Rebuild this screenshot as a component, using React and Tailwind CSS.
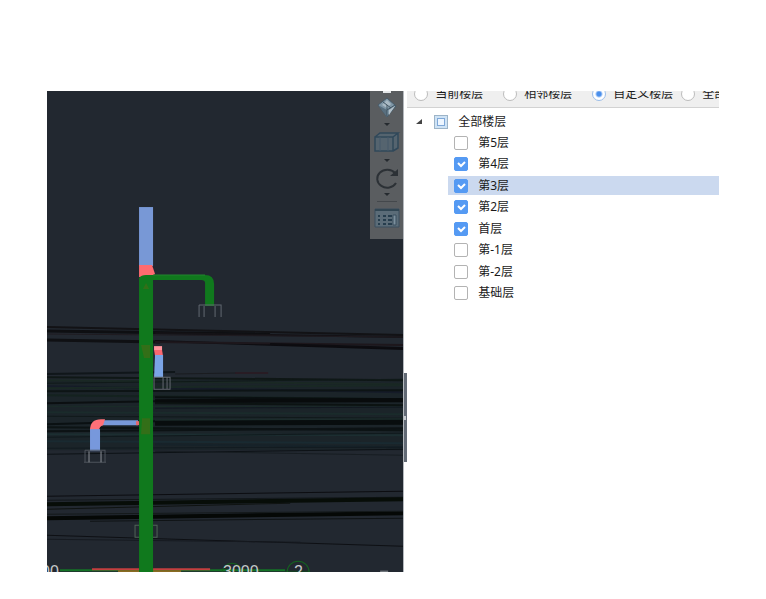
import { useState } from "react";

const BASE = [
  // x1, y1, x2, y2, colour, width
  [47, 327, 403, 335, "#121215", 2],
  [47, 331, 270, 334, "#0e0f12", 3],
  [155, 333, 403, 337, "#141216", 2],
  [47, 334, 403, 337, "#1f1b20", 1],
  [47, 340, 160, 342, "#0f1013", 3],
  [155, 341, 403, 349, "#0c0c10", 2],
  [155, 342, 403, 345, "#1d171c", 2],
  [270, 344, 403, 348, "#0d0c10", 2],
  [47, 374, 175, 372, "#10161a", 2],
  [175, 374, 235, 373, "#1a1c20", 1],
  [235, 373, 268, 373, "#2e1018", 1],
  [47, 377, 403, 380, "#0f1716", 2],
  [47, 380, 403, 384, "#1a2824", 2],
  [47, 383, 403, 379, "#101a19", 1],
  [47, 386, 403, 392, "#151b28", 2],
  [47, 388, 403, 385, "#192824", 2],
  [47, 391, 403, 390, "#0d1415", 2],
  [47, 395, 403, 399, "#14221f", 2],
  [155, 397, 403, 399, "#0a1011", 2],
  [47, 403, 155, 401, "#0b0f11", 2],
  [155, 401, 403, 400, "#080b0c", 4],
  [155, 403, 403, 405, "#0c1312", 2],
  [47, 406, 403, 407, "#1a2c28", 1],
  [155, 408, 403, 407, "#121821", 1],
  [47, 412, 403, 414, "#1a2b2b", 2],
  [47, 416, 403, 418, "#10191a", 1],
  [155, 420, 403, 419, "#1b2b2a", 2],
  [47, 424, 155, 421, "#0a1012", 2],
  [155, 423, 403, 422, "#080d0e", 5],
  [47, 427, 403, 430, "#0c1314", 2],
  [47, 431, 403, 428, "#0c1214", 2],
  [47, 434, 403, 435, "#1c2e31", 2],
  [47, 437, 403, 433, "#101a1d", 1],
  [47, 441, 403, 443, "#192a31", 2],
  [155, 444, 403, 447, "#162229", 2],
  [47, 448, 403, 447, "#121b20", 1],
  [47, 454, 403, 449, "#0d1216", 1],
  [155, 451, 403, 455, "#171d22", 1],
  [47, 496, 403, 491, "#0c0d11", 1],
  [47, 500, 403, 497, "#12171a", 1],
  [47, 504, 403, 499, "#070d08", 4],
  [47, 509, 290, 503, "#0f1311", 1],
  [47, 518, 403, 513, "#050806", 4],
  [47, 514, 403, 511, "#14191a", 1],
  [90, 521, 403, 518, "#0f1315", 1],
  [47, 535, 403, 546, "#0e1014", 1],
  [47, 539, 300, 542, "#161a20", 1],
];

function Model() {
  return (
    <svg
      className="block h-full w-full"
      viewBox="47 91 356 481"
      preserveAspectRatio="xMinYMin slice"
      role="img"
      aria-label="三维管道模型"
    >
      <rect x="47" y="91" width="356" height="481" fill="#222830" />
      <rect x="47" y="380" width="356" height="70" fill="#1b2429" />
      {BASE.map(([x1, y1, x2, y2, c, w], i) => (
        <line key={i} x1={x1} y1={y1} x2={x2} y2={y2} stroke={c} strokeWidth={w} />
      ))}

      <path d="M60 570H285" stroke="#147326" strokeWidth="2" />
      <path d="M285 571H310" stroke="#14471f" />
      <path d="M92 569H139M153 569H210" stroke="#c43f3f" strokeWidth="2" />
      <path d="M118 571h21M153 571h28" stroke="#8a6a22" strokeWidth="2" />

      <rect x="139" y="207" width="14" height="59" fill="#7898d6" />
      <path d="M139 265h13l3 9-4 3h-12z" fill="#ff6b70" />
      <path
        d="M139 278q2-3 7-3h59q9 0 9 9v22h-9v-23q0-3-4-3h-48v292h-14z"
        fill="#10791d"
      />
      <path d="M153 275h52" stroke="#23852e" />
      <path d="M143 289l3-6 3 6zM141 345h9v13h-6zM142 418h8v16h-9z" fill="#4b6916" opacity="0.6" />
      <path d="M199 305h22v12M199 305v12M204 306v11M215 306v11" fill="none" stroke="#616871" />

      <path d="M154 346h8v4h-8z" fill="#ff969d" />
      <path d="M154 350h8l1 6h-8z" fill="#fa6870" />
      <path d="M155 355h8v22h-9z" fill="#7ba4e5" />
      <path d="M154 377h16v12h-16zM163 377v12M167 377v12" fill="none" stroke="#63676e" />

      <path d="M100 420h38v5h-38z" fill="#7899d9" />
      <path d="M136 421h3v4h-3z" fill="#e2686f" />
      <path d="M90 430q0-11 11-11h4l-2 6q-4 1-4 6z" fill="#ff7078" />
      <rect x="90" y="429" width="10" height="22" fill="#7798dc" />
      <path d="M85 450h20v12M85 450v12M84 462h22" fill="none" stroke="#4d535b" />
      <path d="M89 451v11M101 451v11" stroke="#8c9096" />
      <path d="M139 525h-4v12h4M153 525h4v12h-4" fill="none" stroke="#4f6457" />

      <circle cx="232" cy="573" r="10" fill="none" stroke="#14641f" />
      <circle cx="298" cy="572" r="11" fill="none" stroke="#14641f" />
      <g fill="#c5c9ca" fontFamily="'Liberation Sans', Arial, sans-serif" fontSize="16">
        <text x="223" y="577">3000</text>
        <text x="294" y="577">2</text>
        <text x="41" y="577">00</text>
      </g>
      <path d="M380 571h8" stroke="#92979c" />
    </svg>
  );
}

function Caret() {
  return (
    <svg className="h-1 w-2" viewBox="0 0 8 4" aria-hidden="true">
      <path d="M1 0h6L4 3z" fill="#252a2f" />
    </svg>
  );
}

function ViewTools() {
  return (
    <div className="absolute top-0 right-0 flex h-[148px] w-[33px] flex-col items-center overflow-hidden bg-[#5a5d60]">
      <div className="h-[2px] w-2 shrink-0 bg-[#e4e6e8]" />
      <button type="button" aria-label="动态观察" className="mt-1 shrink-0">
        <svg className="block h-6 w-6" viewBox="0 0 24 24">
          <path d="M3 8L12 1l9 8-9 11z" fill="#7f96a6" stroke="#465a68" />
          <path d="M3 8l9 5v7z" fill="#596f7f" />
          <path d="M12 3l4 4-4 4-5-3z" fill="#a9b9c4" />
          <path d="M14 13l6-4-6 9z" fill="#b4c1ca" />
          <path d="M12 13l8-5M12 13V8M12 13v6M8 5l8 6" stroke="#405462" />
        </svg>
      </button>
      <div className="flex h-2 shrink-0 items-center"><Caret /></div>
      <button type="button" aria-label="立方体视图" className="shrink-0">
        <svg className="block h-7 w-7" viewBox="0 0 28 28">
          <path d="M2 8l5-4h19l-1 15-5 3H2z" fill="#55646f" />
          <path d="M2 8h18v14H2zM2 8l5-4h18l-5 4M25 4v15l-5 3" fill="none" stroke="#30485a" strokeWidth="1.5" />
          <path d="M7 8v14M15 8v14" stroke="#46596a" />
        </svg>
      </button>
      <div className="flex h-2 shrink-0 items-center"><Caret /></div>
      <button type="button" aria-label="旋转" className="shrink-0">
        <svg className="block h-7 w-7" viewBox="0 0 28 28" fill="none">
          <path d="M22 8A10 9 0 1 0 23 18" stroke="#2c3136" strokeWidth="2" />
          <path d="M25 4v7h-8z" fill="#2c3136" />
        </svg>
      </button>
      <div className="flex h-1 shrink-0 items-center"><Caret /></div>
      <div className="mt-1 h-px w-5 shrink-0 bg-[#44484c]" />
      <button type="button" aria-label="显示设置" className="mt-1 shrink-0">
        <svg className="block h-6 w-7" viewBox="0 0 28 24">
          <path d="M2 3h24v18H2z" fill="#5b6c78" stroke="#3a4f5e" />
          <path d="M2 4h24" stroke="#314653" strokeWidth="2" />
          <path d="M5 10h2M5 14h2M5 18h2M10 10h3M10 14h3M10 18h3M15 10h4M15 14h4M15 18h4" stroke="#263d4d" strokeWidth="2" />
          <path d="M20 9h3v10h-3z" fill="#7c909d" stroke="#3a4f5e" />
        </svg>
      </button>
    </div>
  );
}

const SCOPES = ["当前楼层", "相邻楼层", "自定义楼层", "全部楼层"];

function ScopeBar() {
  const [scope, setScope] = useState(2);
  return (
    <fieldset className="flex h-[17px] items-center overflow-hidden border-b border-[#d2d2d2] bg-[#efefef] pb-[10px] pl-[7px]">
      {SCOPES.map((name, i) => (
        <label key={name} className={"flex shrink-0 items-center gap-[7px] " + (i === 2 ? "mr-2" : "mr-5")}>
          <input
            type="radio"
            name="scope"
            checked={scope === i}
            onChange={() => setScope(i)}
            className="h-[14px] w-[14px] appearance-none rounded-full border border-[#bcbcbc] bg-white checked:border-[#9bbde8] checked:bg-[radial-gradient(circle,#4a8fec_2px,#ffffff_4px)]"
          />
          <span>{name}</span>
        </label>
      ))}
    </fieldset>
  );
}

function Check({ checked, onChange }) {
  return (
    <span className="relative block h-[14px] w-[14px] shrink-0">
      <input
        type="checkbox"
        checked={checked}
        onChange={onChange}
        className="block h-[14px] w-[14px] appearance-none rounded-xs border border-[#b3b3b3] bg-white checked:border-[#559af3] checked:bg-[#559af3]"
      />
      {checked && (
        <svg className="pointer-events-none absolute inset-0" viewBox="0 0 14 14" fill="none" aria-hidden="true">
          <path d="M4 6l3 3 4-4" stroke="#fff" strokeWidth="2" />
        </svg>
      )}
    </span>
  );
}

const FLOORS = ["第5层", "第4层", "第3层", "第2层", "首层", "第-1层", "第-2层", "基础层"];

function FloorTree() {
  const [shown, setShown] = useState([false, true, true, true, true, false, false, false]);
  const [open, setOpen] = useState(true);
  const all = shown.every(Boolean);
  const toggle = (i) => setShown(shown.map((v, j) => (j === i ? !v : v)));
  return (
    <div className="pt-[3px]">
      <div className="flex h-[21px] items-center pl-2">
        <button type="button" aria-label="展开或收起" aria-expanded={open} onClick={() => setOpen(!open)}>
          <svg className="block h-2 w-2" viewBox="0 0 8 8">
            <path d="M7 1v5H1z" fill="#444" />
          </svg>
        </button>
        <label className="ml-[11px] flex items-center gap-[10px]">
          <input
            type="checkbox"
            checked={all}
            onChange={() => setShown(FLOORS.map(() => !all))}
            className="h-[14px] w-[14px] appearance-none border border-[#9db4c8] bg-[#eef6ff] shadow-[inset_0_0_0_2px_#cfe3f5,inset_0_0_0_3px_#7fa8d8] checked:bg-[#559af3]"
          />
          <span>全部楼层</span>
        </label>
      </div>
      {open && (
        <ul className="grid h-[172px] grid-rows-8 items-center pl-[41px]">
          {FLOORS.map((name, i) => (
            <li key={name} className={i === 2 ? "bg-[#cbd9ef]" : ""}>
              <label className="flex h-[19px] items-center gap-[10px] pl-[6px]">
                <Check checked={shown[i]} onChange={() => toggle(i)} />
                <span>{name}</span>
              </label>
            </li>
          ))}
        </ul>
      )}
    </div>
  );
}

export default function App() {
  return (
    <div className="bg-white px-[47px] pt-[91px] pb-[27px] font-['Noto_Sans','Noto_Sans_CJK_SC',sans-serif] text-xs leading-4 text-[#1a1a1a]">
      <main className="flex h-[481px] overflow-hidden">
        <section className="relative w-[53%] shrink-0 overflow-hidden">
          <Model />
          <ViewTools />
        </section>
        <div className="flex w-1 shrink-0 flex-col justify-center border-l border-[#b4b8bd] pt-[172px]">
          <button type="button" aria-label="折叠面板" className="flex h-[89px] w-full items-center bg-[#626a75]">
            <span className="h-1 w-[2px] bg-[#c6cbd0]" />
          </button>
        </div>
        <aside className="min-w-0 flex-1">
          <ScopeBar />
          <FloorTree />
        </aside>
      </main>
    </div>
  );
}
